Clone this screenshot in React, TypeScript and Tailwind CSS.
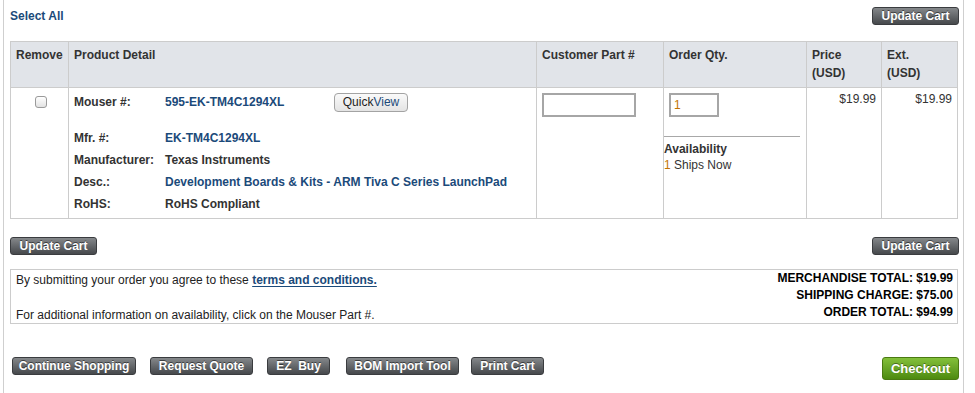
import React from "react";

const darkBtn =
  "inline-flex items-center justify-center h-[18px] rounded-[3px] border border-[#3a3c3f] bg-gradient-to-b from-[#85888b] to-[#46494c] text-white font-bold text-[12px] leading-none [text-shadow:0_-1px_0_rgba(0,0,0,0.5)] shadow-[0_1px_0_rgba(255,255,255,0.4)]";

function DarkButton({ label, width }: { label: string; width: string }) {
  return (
    <button type="button" className={`${darkBtn} ${width}`}>
      {label}
    </button>
  );
}

const details = [
  { label: "Mfr. #:", value: "EK-TM4C1294XL", link: true },
  { label: "Manufacturer:", value: "Texas Instruments", link: false },
  {
    label: "Desc.:",
    value: "Development Boards & Kits - ARM Tiva C Series LaunchPad",
    link: true,
  },
  { label: "RoHS:", value: "RoHS Compliant", link: false },
];

export default function App() {
  return (
    <div className="font-['Liberation_Sans',Arial,sans-serif] text-[12px] text-[#333] bg-white w-[975px] h-[393px] overflow-hidden">
      <div className="ml-[3px] w-[961px] h-[393px] border-x border-[#cfcfcf] pl-[6px] pr-[5px]">
        {/* Top bar */}
        <div className="flex items-center justify-between pt-[7px]">
          <a className="font-bold text-[#1b4a7a] leading-[14px]">Select All</a>
          <DarkButton label="Update Cart" width="w-[87px] -mr-[1px]" />
        </div>

        {/* Cart table */}
        <table className="mt-[16px] w-[947px] border-collapse table-fixed">
          <colgroup>
            <col className="w-[58px]" />
            <col className="w-[468px]" />
            <col className="w-[127px]" />
            <col className="w-[143px]" />
            <col className="w-[75px]" />
            <col className="w-[76px]" />
          </colgroup>
          <thead>
            <tr className="bg-[#e1e4e9] h-[46px] align-top text-left font-bold text-[#333] leading-[18px]">
              <th className="border border-[#cccccc] pt-[4px] px-[5px] font-bold">Remove</th>
              <th className="border border-[#cccccc] pt-[4px] px-[5px] font-bold">Product Detail</th>
              <th className="border border-[#cccccc] pt-[4px] px-[5px] font-bold">Customer Part #</th>
              <th className="border border-[#cccccc] pt-[4px] px-[5px] font-bold">Order Qty.</th>
              <th className="border border-[#cccccc] pt-[4px] px-[5px] font-bold">
                Price
                <br />
                (USD)
              </th>
              <th className="border border-[#cccccc] pt-[4px] px-[5px] font-bold">
                Ext.
                <br />
                (USD)
              </th>
            </tr>
          </thead>
          <tbody>
            <tr className="h-[131px] align-top">
              <td className="border border-[#cccccc] pt-[8px]">
                <div className="flex justify-center pl-[2px]">
                  <input
                    type="checkbox"
                    className="appearance-none w-[12px] h-[12px] rounded-[3px] border border-[#9a9a9a] bg-gradient-to-b from-white to-[#e2e2e2]"
                  />
                </div>
              </td>
              <td className="border border-[#cccccc] pt-[4px] pl-[5px]">
                <div className="grid grid-cols-[91px_169px_auto] items-center h-[20px] font-bold">
                  <span>Mouser #:</span>
                  <a className="text-[#1b4a7a]">595-EK-TM4C1294XL</a>
                  <span>
                    <button
                      type="button"
                      className="h-[19px] w-[74px] rounded-[4px] border border-[#a3a3a3] bg-gradient-to-b from-[#fafafa] to-[#e4e4e4] text-[12px] font-normal text-[#222] leading-none"
                    >
                      Quick<span className="text-[#1b4a7a]">View</span>
                    </button>
                  </span>
                </div>
                <div className="mt-[15px] flex flex-col font-bold">
                  {details.map((d) => (
                    <div key={d.label} className="grid grid-cols-[91px_auto] items-center h-[22px]">
                      <span>{d.label}</span>
                      <span className={d.link ? "text-[#1b4a7a]" : ""}>{d.value}</span>
                    </div>
                  ))}
                </div>
              </td>
              <td className="border border-[#cccccc] pt-[5px] pl-[5px]">
                <input
                  type="text"
                  className="block w-[94px] h-[24px] border-2 border-[#a6a6a6] bg-white outline-none"
                />
              </td>
              <td className="border border-[#cccccc] pt-[5px] pr-[6px]">
                <input
                  type="text"
                  defaultValue="1"
                  className="block ml-[5px] w-[50px] h-[24px] border-2 border-[#a6a6a6] bg-white px-[3px] text-[12px] text-[#c27400] outline-none"
                />
                <div className="mt-[19px] border-t border-[#a8a8a8] pt-[4px] leading-[16px]">
                  <div className="font-bold text-[#333]">Availability</div>
                  <div>
                    <span className="text-[#c27400]">1</span> Ships Now
                  </div>
                </div>
              </td>
              <td className="border border-[#cccccc] pt-[4px] pr-[5px] text-right leading-[14px]">$19.99</td>
              <td className="border border-[#cccccc] pt-[4px] pr-[5px] text-right leading-[14px]">$19.99</td>
            </tr>
          </tbody>
        </table>

        {/* Update buttons */}
        <div className="mt-[18px] flex justify-between">
          <DarkButton label="Update Cart" width="w-[87px]" />
          <DarkButton label="Update Cart" width="w-[87px] -mr-[1px]" />
        </div>

        {/* Summary */}
        <div className="mt-[14px] flex justify-between h-[55px] border border-[#cccccc] text-[#222]">
          <div className="flex flex-col justify-between pl-[5px] pt-[3px] pb-[1px] leading-[14px]">
            <div>
              By submitting your order you agree to these{" "}
              <a className="font-bold text-[#1b4a7a] underline decoration-[#1b4a7a] underline-offset-2">
                terms and conditions.
              </a>
            </div>
            <div>For additional information on availability, click on the Mouser Part #.</div>
          </div>
          <div className="flex flex-col items-end pr-[4px] font-bold text-black leading-[17px]">
            <div>MERCHANDISE TOTAL: $19.99</div>
            <div>SHIPPING CHARGE: $75.00</div>
            <div>ORDER TOTAL: $94.99</div>
          </div>
        </div>

        {/* Action buttons */}
        <div className="mt-[33px] flex items-start justify-between">
          <div className="flex items-center pl-[2px]">
            <DarkButton label="Continue Shopping" width="w-[124px]" />
            <DarkButton label="Request Quote" width="w-[103px] ml-[14px]" />
            <DarkButton label="EZ  Buy" width="w-[63px] ml-[14px] whitespace-pre" />
            <DarkButton label="BOM Import Tool" width="w-[113px] ml-[16px]" />
            <DarkButton label="Print Cart" width="w-[73px] ml-[12px]" />
          </div>
          <button
            type="button"
            className="h-[23px] w-[77px] -mr-[1px] rounded-[3px] border border-[#4a7a12] bg-gradient-to-b from-[#83c03a] to-[#4d8a0e] text-white font-bold text-[13px] leading-none [text-shadow:0_-1px_0_rgba(0,0,0,0.4)]"
          >
            Checkout
          </button>
        </div>
      </div>
    </div>
  );
}
